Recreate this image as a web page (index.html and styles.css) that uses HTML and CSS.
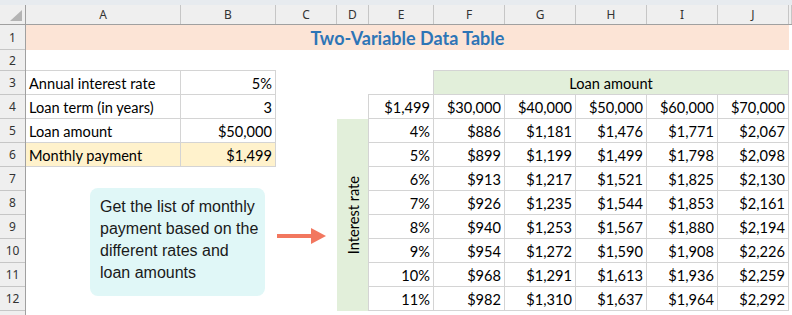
FILE: index.html
```html
<!DOCTYPE html>
<html>
<head>
<meta charset="utf-8">
<link rel="stylesheet" href="styles.css">
</head>
<body>
<div class="topbar"></div>
<div class="colbar">
  <div class="ch corner w-hdr"><span class="tri"></span></div>
  <div class="ch w-a">A</div>
  <div class="ch w-b">B</div>
  <div class="ch w-c">C</div>
  <div class="ch w-d">D</div>
  <div class="ch w-e">E</div>
  <div class="ch w-f">F</div>
  <div class="ch w-f">G</div>
  <div class="ch w-f">H</div>
  <div class="ch w-f">I</div>
  <div class="ch w-f">J</div>
  <div class="ch w-rest"></div>
</div>
<div class="body">
  <div class="rowhdrs">
    <div class="rh h25">1</div>
    <div class="rh h21">2</div>
    <div class="rh">3</div>
    <div class="rh">4</div>
    <div class="rh">5</div>
    <div class="rh">6</div>
    <div class="rh">7</div>
    <div class="rh">8</div>
    <div class="rh">9</div>
    <div class="rh">10</div>
    <div class="rh">11</div>
    <div class="rh">12</div>
    <div class="rh last"></div>
  </div>

  <div class="title">Two-Variable Data Table</div>

  <div class="ltable">
    <div class="c">Annual interest rate</div><div class="c num">5%</div>
    <div class="c">Loan term (in years)</div><div class="c num">3</div>
    <div class="c">Loan amount</div><div class="c num">$50,000</div>
    <div class="c hl">Monthly payment</div><div class="c num hl">$1,499</div>
  </div>

  <div class="loanhdr">Loan amount</div>

  <div class="ratelbl"><span>Interest rate</span></div>

  <div class="dtable">
    <div class="c num">$1,499</div><div class="c num">$30,000</div><div class="c num">$40,000</div><div class="c num">$50,000</div><div class="c num">$60,000</div><div class="c num">$70,000</div>
    <div class="c num">4%</div><div class="c num">$886</div><div class="c num">$1,181</div><div class="c num">$1,476</div><div class="c num">$1,771</div><div class="c num">$2,067</div>
    <div class="c num">5%</div><div class="c num">$899</div><div class="c num">$1,199</div><div class="c num">$1,499</div><div class="c num">$1,798</div><div class="c num">$2,098</div>
    <div class="c num">6%</div><div class="c num">$913</div><div class="c num">$1,217</div><div class="c num">$1,521</div><div class="c num">$1,825</div><div class="c num">$2,130</div>
    <div class="c num">7%</div><div class="c num">$926</div><div class="c num">$1,235</div><div class="c num">$1,544</div><div class="c num">$1,853</div><div class="c num">$2,161</div>
    <div class="c num">8%</div><div class="c num">$940</div><div class="c num">$1,253</div><div class="c num">$1,567</div><div class="c num">$1,880</div><div class="c num">$2,194</div>
    <div class="c num">9%</div><div class="c num">$954</div><div class="c num">$1,272</div><div class="c num">$1,590</div><div class="c num">$1,908</div><div class="c num">$2,226</div>
    <div class="c num">10%</div><div class="c num">$968</div><div class="c num">$1,291</div><div class="c num">$1,613</div><div class="c num">$1,936</div><div class="c num">$2,259</div>
    <div class="c num">11%</div><div class="c num">$982</div><div class="c num">$1,310</div><div class="c num">$1,637</div><div class="c num">$1,964</div><div class="c num">$2,292</div>
  </div>

  <div class="callout">Get the list of monthly<br>payment based on the<br>different rates and<br>loan amounts</div>

  <svg class="arrow" width="50" height="18" viewBox="0 0 50 18">
    <rect x="0" y="6" width="36" height="4" fill="#f2775f"/>
    <polygon points="34,0 49,8 34,16" fill="#f2775f"/>
  </svg>
</div>
</body>
</html>
```

FILE: styles.css
```css
* {
  box-sizing: border-box;
  margin: 0;
  padding: 0;
}

body {
  margin: 0;
  width: 792px;
  height: 315px;
  overflow: hidden;
  background: #ffffff;
  font-family: Lato, "Liberation Sans", sans-serif;
  color: #000;
}

.topbar {
  height: 5px;
  background: #e7ebef;
}

.colbar {
  display: flex;
  height: 20px;
  background: #efefef;
  border-bottom: 1px solid #a0a0a0;
}

.ch {
  flex: none;
  display: flex;
  align-items: center;
  justify-content: center;
  border-right: 1px solid #c6c6c6;
  font-family: "Noto Sans", sans-serif;
  font-size: 12px;
  color: #333;
}

.corner {
  border-right-color: #a0a0a0;
  justify-content: flex-end;
  align-items: flex-end;
  padding: 0 3px 3px 0;
}

.tri {
  width: 12px;
  height: 11px;
  background: #b4b4b4;
  clip-path: polygon(100% 0, 100% 100%, 0 100%);
}

.w-hdr { width: 26px; }
.w-a { width: 155px; }
.w-b { width: 95px; }
.w-c { width: 61px; }
.w-d { width: 32px; }
.w-e { width: 65px; }
.w-f { width: 71px; }
.w-rest { flex: 1; }

.body {
  position: relative;
  display: grid;
  grid-template-columns: 26px 155px 95px 61px 32px 65px repeat(5, 71px) 1fr;
  grid-template-rows: 25px 21px repeat(10, 24px) 1fr;
  height: 290px;
}

.rowhdrs {
  grid-column: 1;
  grid-row: 1 / -1;
  display: flex;
  flex-direction: column;
  background: #efefef;
  border-right: 1px solid #a0a0a0;
}

.rh {
  flex: none;
  height: 24px;
  border-bottom: 1px solid #c6c6c6;
  display: flex;
  align-items: center;
  justify-content: center;
  font-family: "Noto Sans", sans-serif;
  font-size: 12px;
  color: #333;
}

.rh.h25 { height: 25px; }
.rh.h21 { height: 21px; }
.rh.last { flex: 1; border-bottom: 0; }

.title {
  grid-column: 2 / 12;
  grid-row: 1;
  background: #fce4d6;
  display: flex;
  align-items: center;
  justify-content: center;
  font-weight: 700;
  font-size: 18px;
  color: #2e75b6;
}

.ltable {
  grid-column: 2 / 4;
  grid-row: 3 / 7;
  margin-top: -1px;
  border-top: 1px solid #d4d4d4;
  display: grid;
  grid-template-columns: 155px 95px;
  grid-auto-rows: 24px;
}

.c {
  display: flex;
  align-items: flex-end;
  padding: 0 3px 1px 3px;
  border-right: 1px solid #d4d4d4;
  border-bottom: 1px solid #d4d4d4;
  font-size: 14.6px;
  line-height: 18px;
  white-space: nowrap;
}

.num { justify-content: flex-end; }
.hl { background: #fff2cc; }

.loanhdr {
  grid-column: 7 / 12;
  grid-row: 3;
  margin: -1px 0 0 -1px;
  border: 1px solid #d4d4d4;
  background: #e2efda;
  display: flex;
  align-items: flex-end;
  justify-content: center;
  padding-bottom: 1px;
  font-size: 14.6px;
  line-height: 18px;
}

.ratelbl {
  grid-column: 5;
  grid-row: 5 / 13;
  background: #e2efda;
  display: flex;
  align-items: center;
  justify-content: center;
  font-size: 14.6px;
}

.ratelbl span {
  writing-mode: vertical-rl;
  transform: rotate(180deg);
}

.dtable {
  grid-column: 6 / 12;
  grid-row: 4 / 13;
  margin: -1px 0 0 -1px;
  border-top: 1px solid #d4d4d4;
  border-left: 1px solid #d4d4d4;
  display: grid;
  grid-template-columns: 65px repeat(5, 71px);
  grid-auto-rows: 24px;
}

.callout {
  position: absolute;
  left: 90px;
  top: 163px;
  width: 175px;
  height: 108px;
  background: #e0f7f7;
  border-radius: 8px;
  padding: 8px 0 0 10px;
  font-family: "Liberation Sans", Arial, sans-serif;
  font-size: 16px;
  line-height: 22px;
  color: #1a1a1a;
}

.arrow {
  position: absolute;
  left: 277px;
  top: 203px;
}
```
